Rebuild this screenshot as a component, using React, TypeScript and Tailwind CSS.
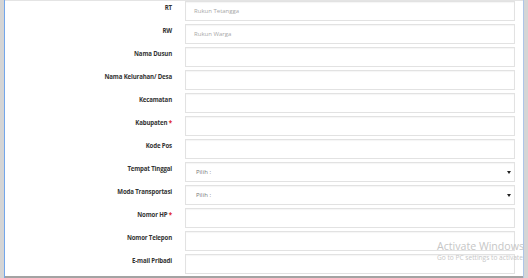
const rows: { label: string; required?: boolean; kind: "input" | "select"; placeholder?: string }[] = [
  { label: "RT", kind: "input", placeholder: "Rukun Tetangga" },
  { label: "RW", kind: "input", placeholder: "Rukun Warga" },
  { label: "Nama Dusun", kind: "input" },
  { label: "Nama Kelurahan/ Desa", kind: "input" },
  { label: "Kecamatan", kind: "input" },
  { label: "Kabupaten", required: true, kind: "input" },
  { label: "Kode Pos", kind: "input" },
  { label: "Tempat Tinggal", kind: "select" },
  { label: "Moda Transportasi", kind: "select" },
  { label: "Nomor HP", required: true, kind: "input" },
  { label: "Nomor Telepon", kind: "input" },
  { label: "E-mail Pribadi", kind: "input" },
  { label: "", kind: "input" },
]

export default function App() {
  return (
    <div
      className="relative flex h-[278px] w-[528px] overflow-hidden bg-white"
      style={{ fontFamily: '"Open Sans", "Liberation Sans", sans-serif' }}
    >
      <div className="w-[4px] shrink-0 bg-[#d5d5d5]" />
      <div className="w-[1px] shrink-0 bg-[#73a6ea]" />

      <div className="flex flex-1 flex-col">
        <div className="h-[1px] shrink-0 bg-[#e4e4e4]" />
        <div className="flex flex-1 flex-col gap-[3px] overflow-hidden pr-[8px]">
          {rows.map((r, i) => (
            <div key={i} className="flex shrink-0">
              <div className="w-[167px] shrink-0 pt-[2px] text-right text-[6.1px] font-bold leading-[10px] tracking-[-0.15px] text-[#333]">
                {r.label}
                {r.required && <span className="text-[#e02020]"> *</span>}
              </div>
              <div className="ml-[13px] flex h-[20px] flex-1 items-center border border-[#e2e2e2] shadow-[inset_0_1px_1px_rgba(0,0,0,0.04)]">
                {r.kind === "input" ? (
                  <span className="pl-[8px] text-[6px] text-[#a8a8a8]">{r.placeholder}</span>
                ) : (
                  <div className="flex flex-1 items-center justify-between pl-[10px] pr-[3px]">
                    <span className="text-[6px] text-[#777]">Pilih :</span>
                    <svg width="4" height="3" viewBox="0 0 4 3">
                      <path d="M0 0h4L2 3z" fill="#222" />
                    </svg>
                  </div>
                )}
              </div>
            </div>
          ))}
        </div>
        <div className="h-[2px] shrink-0 bg-[#a3a3a3]" />
      </div>

      <div className="pointer-events-none absolute left-[437px] top-[240px] whitespace-nowrap text-[#c6c6c6]">
        <div className="text-[10.6px] leading-[13px]">Activate Windows</div>
        <div className="text-[6.6px] leading-[10px]">Go to PC settings to activate Windows.</div>
      </div>

      <div className="relative z-10 w-[1px] shrink-0 bg-[#aec5e8]" />
      <div className="relative z-10 w-[4px] shrink-0 bg-[#d5d5d5]" />
    </div>
  )
}
